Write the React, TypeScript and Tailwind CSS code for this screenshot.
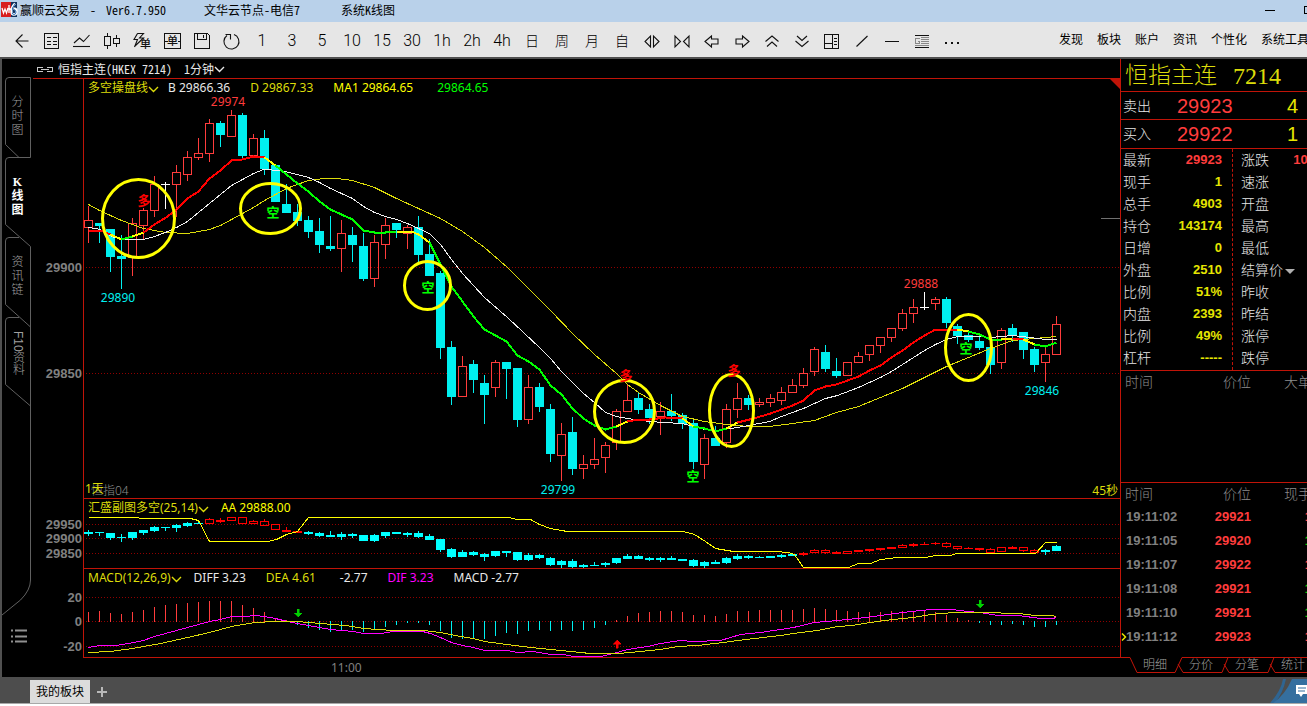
import type { ReactNode } from 'react';

type Candle = [kind: 'r' | 'c' | 'w', high: number, top: number, bottom: number, low: number];
type Point = [number, number];

const FIRST_X = 4;
const STEP = 11;

const PRICE: Candle[] = [
  ['r', 206, 220, 228, 243], ['c', 223, 223, 226, 243], ['c', 229, 229, 257, 272], ['c', 235, 256, 259, 289],
  ['r', 218, 223, 258, 276], ['r', 208, 210, 226, 239], ['r', 176, 184, 211, 217], ['w', 182, 184, 185, 209],
  ['r', 165, 172, 185, 217], ['r', 151, 157, 175, 181], ['r', 138, 153, 158, 160], ['r', 119, 123, 154, 162],
  ['c', 121, 123, 135, 147], ['r', 110, 115, 137, 137], ['c', 113, 115, 156, 158], ['r', 134, 138, 156, 156],
  ['c', 130, 138, 169, 175], ['c', 165, 165, 202, 202], ['c', 184, 204, 213, 213], ['c', 204, 212, 221, 226],
  ['c', 216, 220, 232, 238], ['c', 218, 231, 245, 253], ['c', 216, 246, 249, 251], ['r', 220, 233, 249, 272],
  ['c', 227, 235, 245, 262], ['c', 233, 246, 279, 281], ['r', 235, 242, 279, 287], ['r', 218, 225, 245, 259],
  ['c', 223, 223, 230, 238], ['r', 225, 227, 234, 249], ['c', 216, 227, 255, 262], ['c', 239, 254, 276, 276],
  ['c', 271, 273, 348, 359], ['c', 341, 347, 397, 405], ['r', 356, 366, 397, 397], ['c', 360, 364, 380, 393],
  ['c', 375, 383, 395, 424], ['r', 360, 362, 388, 397], ['c', 362, 362, 369, 399], ['c', 368, 368, 420, 427],
  ['r', 375, 387, 420, 424], ['c', 383, 387, 407, 412], ['c', 404, 409, 454, 462], ['r', 423, 434, 456, 481],
  ['c', 417, 432, 469, 475], ['r', 455, 464, 469, 479], ['r', 438, 459, 465, 469], ['r', 442, 445, 458, 473],
  ['r', 409, 411, 443, 450], ['r', 385, 400, 412, 412], ['c', 393, 398, 410, 414], ['c', 404, 409, 418, 424],
  ['r', 402, 411, 417, 435], ['c', 394, 411, 416, 421], ['c', 413, 415, 424, 429], ['c', 418, 423, 462, 469],
  ['r', 434, 438, 465, 479], ['c', 426, 438, 446, 446], ['r', 404, 409, 443, 448], ['r', 383, 398, 410, 418],
  ['c', 395, 398, 405, 410], ['r', 398, 402, 405, 407], ['r', 394, 398, 403, 407], ['r', 387, 392, 401, 405],
  ['r', 379, 385, 393, 393], ['r', 368, 373, 386, 388], ['r', 347, 349, 372, 376], ['c', 345, 352, 369, 372],
  ['c', 358, 371, 376, 378], ['r', 362, 362, 376, 376], ['r', 352, 356, 363, 363], ['r', 345, 345, 355, 361],
  ['r', 337, 337, 346, 353], ['r', 328, 328, 338, 342], ['r', 309, 313, 329, 331], ['r', 299, 307, 314, 323],
  ['w', 292, 307, 308, 310], ['r', 297, 299, 304, 310], ['c', 297, 299, 323, 328], ['c', 324, 326, 336, 344],
  ['c', 331, 335, 340, 342], ['c', 334, 341, 348, 350], ['c', 347, 347, 365, 374], ['r', 328, 330, 363, 369],
  ['c', 324, 328, 336, 342], ['c', 332, 332, 350, 359], ['c', 347, 349, 365, 372], ['r', 347, 354, 363, 382],
  ['r', 316, 324, 355, 355],
];

const SUB: Candle[] = [
  ['c', 530, 532, 534, 536], ['c', 532, 532, 533, 536], ['c', 533, 533, 538, 540], ['c', 534, 537, 538, 542],
  ['c', 532, 532, 538, 540], ['c', 530, 530, 533, 535], ['c', 526, 527, 531, 532], ['c', 527, 527, 528, 531],
  ['c', 524, 525, 528, 532], ['c', 522, 523, 526, 527], ['c', 520, 523, 524, 524], ['r', 518, 519, 524, 524],
  ['r', 518, 520, 522, 523], ['r', 517, 517, 521, 521], ['r', 517, 517, 524, 524], ['r', 520, 521, 524, 524],
  ['r', 519, 521, 526, 526], ['r', 524, 524, 530, 530], ['r', 527, 530, 532, 532], ['r', 531, 531, 533, 533],
  ['c', 531, 532, 534, 535], ['c', 532, 533, 536, 537], ['c', 531, 535, 537, 537], ['c', 532, 534, 537, 540],
  ['c', 533, 534, 536, 538], ['c', 535, 535, 541, 541], ['c', 534, 535, 541, 542], ['c', 532, 532, 536, 538],
  ['c', 532, 532, 534, 534], ['c', 532, 533, 535, 537], ['c', 531, 533, 537, 538], ['c', 534, 536, 540, 540],
  ['c', 539, 539, 550, 552], ['c', 548, 549, 557, 558], ['c', 550, 552, 557, 557], ['c', 551, 552, 555, 556],
  ['c', 553, 554, 557, 561], ['c', 551, 551, 556, 557], ['c', 551, 551, 553, 557], ['c', 552, 552, 560, 561],
  ['c', 553, 555, 560, 561], ['c', 554, 555, 558, 559], ['c', 557, 558, 565, 566], ['c', 560, 561, 565, 568],
  ['c', 559, 561, 567, 568], ['c', 564, 565, 567, 568], ['c', 562, 565, 566, 566], ['c', 562, 563, 565, 567],
  ['c', 558, 558, 563, 564], ['c', 554, 556, 559, 559], ['c', 555, 556, 559, 559], ['c', 557, 558, 560, 561],
  ['c', 557, 558, 560, 562], ['c', 556, 558, 560, 560], ['c', 559, 559, 561, 561], ['c', 559, 560, 566, 567],
  ['c', 561, 562, 566, 568], ['c', 560, 562, 564, 564], ['c', 557, 558, 563, 564], ['c', 554, 556, 559, 560],
  ['c', 555, 556, 558, 559], ['c', 556, 557, 558, 558], ['c', 556, 556, 558, 558], ['c', 554, 555, 557, 558],
  ['c', 554, 554, 556, 556], ['r', 552, 553, 555, 556], ['r', 549, 550, 553, 553], ['r', 549, 550, 553, 554],
  ['r', 551, 552, 554, 554], ['r', 551, 551, 554, 554], ['r', 550, 550, 552, 552], ['r', 549, 549, 551, 552],
  ['r', 548, 548, 550, 551], ['r', 547, 547, 549, 549], ['r', 544, 545, 548, 548], ['r', 543, 544, 546, 547],
  ['r', 542, 544, 545, 545], ['r', 542, 543, 544, 545], ['r', 542, 543, 547, 548], ['r', 546, 546, 549, 550],
  ['r', 547, 548, 549, 549], ['r', 548, 548, 550, 551], ['r', 548, 549, 553, 553], ['r', 547, 547, 552, 552],
  ['r', 546, 547, 549, 549], ['r', 547, 547, 551, 552], ['r', 549, 550, 553, 553], ['c', 549, 550, 552, 555],
  ['c', 545, 546, 551, 551],
];

const BARS = [
  612, 611, 613, 614, 612, 610, 607, 605, 604, 603, 602, 601, 601, 601, 605, 608, 612, 618, 620, 625, 628, 630, 632,
  631, 630, 632, 629, 627, 625, 623, 623, 625, 631, 638, 639, 639, 639, 636, 633, 634, 631, 630, 631, 630, 631, 630,
  628, 625, 620, 616, 613, 612, 611, 611, 612, 615, 615, 616, 614, 611, 611, 610, 610, 610, 610, 609, 608, 609, 610,
  611, 612, 612, 612, 611, 611, 612, 611, 612, 615, 618, 620, 623, 625, 625, 624, 625, 627, 627, 625,
];

const TREND: { color: string; pts: Point[] }[] = [
  { color: '#ff0000', pts: [[88, 230], [100, 230], [110, 234]] },
  { color: '#ffff00', pts: [[110, 234], [121, 239]] },
  { color: '#00ff00', pts: [[121, 239], [132, 236]] },
  { color: '#ffff00', pts: [[132, 236], [143, 232]] },
  { color: '#ff0000', pts: [[143, 232], [154, 224], [167, 216], [176, 209], [187, 198], [198, 191], [209, 178], [220, 170], [231, 160], [242, 159], [253, 156], [264, 157]] },
  { color: '#ffff00', pts: [[264, 157], [275, 165]] },
  { color: '#00ff00', pts: [[275, 165], [286, 174], [297, 183], [308, 191], [319, 201], [330, 209], [341, 214], [352, 219], [363, 230], [374, 232], [385, 232], [396, 231]] },
  { color: '#ffff00', pts: [[396, 231], [411, 231], [418, 234], [429, 242]] },
  { color: '#00ff00', pts: [[429, 242], [440, 264], [451, 286], [462, 301], [473, 316], [484, 329], [495, 335], [506, 341], [517, 355], [528, 361], [539, 369], [550, 385], [561, 394], [572, 408], [583, 418], [594, 425], [605, 429], [616, 426]] },
  { color: '#ffff00', pts: [[616, 426], [627, 421]] },
  { color: '#ff0000', pts: [[627, 421], [638, 419], [649, 419], [665, 417], [682, 418]] },
  { color: '#ffff00', pts: [[682, 418], [693, 426]] },
  { color: '#00ff00', pts: [[693, 426], [704, 428], [715, 431], [726, 428]] },
  { color: '#ffff00', pts: [[726, 428], [737, 422]] },
  { color: '#ff0000', pts: [[737, 422], [753, 418], [770, 413], [781, 409], [792, 405], [803, 400], [814, 390], [825, 386], [836, 384], [847, 380], [858, 376], [869, 370], [880, 365], [891, 357], [902, 350], [913, 342], [924, 335], [935, 329], [957, 329]] },
  { color: '#ffff00', pts: [[957, 329], [968, 331]] },
  { color: '#00ff00', pts: [[968, 331], [979, 334], [990, 339], [1001, 339]] },
  { color: '#ffff00', pts: [[1001, 339], [1012, 338]] },
  { color: '#ff0000', pts: [[1012, 338], [1023, 339]] },
  { color: '#ffff00', pts: [[1023, 339], [1034, 344]] },
  { color: '#00ff00', pts: [[1034, 344], [1045, 346], [1056, 342]] },
];

const WHITE_MA: Point[] = [
  [88, 227], [100, 229], [113, 237], [128, 239], [143, 239], [154, 236], [165, 232], [176, 227], [187, 221], [198, 212],
  [209, 203], [220, 194], [231, 185], [242, 179], [253, 173], [263, 169], [280, 170], [297, 174], [308, 177], [319, 182],
  [330, 188], [341, 193], [352, 198], [363, 206], [374, 212], [385, 216], [396, 219], [407, 223], [418, 228], [429, 233],
  [440, 244], [451, 259], [462, 273], [473, 285], [484, 297], [507, 317], [539, 347], [550, 358], [561, 371], [572, 382],
  [583, 393], [594, 402], [605, 412], [616, 416], [627, 418], [649, 421], [663, 422], [682, 423], [693, 426], [704, 429],
  [717, 430], [737, 427], [748, 425], [769, 421], [781, 416], [803, 408], [825, 398], [837, 395], [858, 387], [880, 377],
  [891, 371], [902, 364], [913, 357], [924, 350], [935, 344], [946, 339], [957, 336], [979, 336], [990, 337], [1012, 335],
  [1030, 337], [1045, 339], [1056, 339],
];

const YELLOW_MA: Point[] = [
  [88, 204], [99, 210], [121, 220], [143, 228], [165, 232], [187, 233], [209, 229], [220, 225], [231, 219], [242, 213],
  [253, 207], [264, 200], [275, 194], [286, 188], [297, 184], [308, 180], [323, 178], [337, 178], [352, 180], [374, 187],
  [396, 198], [418, 208], [440, 218], [462, 231], [484, 247], [507, 267], [539, 299], [550, 310], [572, 333], [594, 354],
  [616, 373], [627, 384], [638, 392], [660, 405], [682, 416], [704, 421], [726, 424], [748, 426], [769, 426], [792, 423],
  [814, 420], [825, 416], [836, 412], [858, 406], [880, 397], [902, 388], [924, 377], [946, 366], [968, 357], [990, 348],
  [1012, 340], [1034, 338], [1056, 336],
];

const SUB_LINE: Point[] = [
  [88, 517], [138, 517], [139, 518], [190, 518], [198, 520], [209, 541], [267, 541], [276, 539], [286, 534], [297, 531],
  [308, 517], [509, 517], [516, 519], [530, 519], [539, 524], [550, 528], [561, 530], [567, 531], [683, 531], [694, 534],
  [705, 541], [715, 548], [733, 551], [775, 551], [788, 552], [794, 554], [803, 567], [848, 567], [858, 563], [870, 563],
  [880, 559], [897, 557], [925, 557], [935, 555], [950, 555], [956, 553], [1035, 553], [1045, 542], [1056, 542],
];

const DIF_LINE: Point[] = [
  [88, 647], [99, 645], [115, 645], [128, 643], [143, 640], [154, 636], [165, 633], [176, 630], [187, 627], [198, 624],
  [209, 621], [220, 619], [231, 616], [246, 616], [254, 615], [264, 616], [275, 618], [287, 621], [297, 623], [308, 625],
  [330, 629], [353, 631], [363, 633], [380, 633], [393, 631], [422, 631], [430, 633], [440, 637], [451, 642], [462, 645],
  [473, 647], [484, 650], [507, 650], [517, 652], [533, 651], [550, 654], [563, 654], [573, 656], [600, 656], [613, 653],
  [627, 649], [647, 646], [660, 643], [680, 640], [693, 641], [720, 640], [740, 634], [760, 632], [793, 627], [814, 622],
  [837, 620], [857, 618], [880, 615], [902, 612], [930, 609], [952, 609], [967, 611], [980, 612], [997, 615], [1018, 615],
  [1040, 618], [1052, 618], [1056, 617],
];

const DEA_LINE: Point[] = [
  [88, 652], [110, 651], [132, 648], [160, 643], [187, 637], [209, 632], [231, 626], [254, 622], [275, 621], [297, 621],
  [320, 623], [345, 625], [363, 628], [393, 630], [423, 630], [440, 632], [460, 636], [473, 638], [484, 641], [506, 644],
  [530, 647], [550, 649], [570, 651], [590, 653], [618, 653], [640, 651], [660, 649], [677, 646], [697, 645], [723, 642],
  [745, 639], [780, 635], [800, 632], [817, 630], [837, 626], [852, 625], [870, 622], [892, 619], [913, 617], [930, 614],
  [953, 612], [983, 612], [1018, 613], [1035, 615], [1051, 615], [1056, 616],
];

const ELLIPSES = [
  [138, 218, 36, 39], [270, 208, 30, 25], [427, 285, 23, 24], [624, 411, 30, 31], [731, 410, 22, 36], [968, 347, 23, 33],
];

const SIGNALS: [string, number, number][] = [
  ['多', 144, 205], ['空', 273, 217], ['空', 428, 292], ['多', 626, 380], ['空', 693, 481], ['多', 734, 375], ['空', 966, 353],
];

const EXTREMES: [string, number, number, boolean][] = [
  ['29974', 228, 106, true], ['29890', 118, 302, false], ['29799', 558, 494, false], ['29888', 921, 288, true],
  ['29846', 1042, 395, false],
];

const line = (pts: Point[]) => pts.map(([x, y]) => `${x},${y}`).join(' ');

function Series({ data, up, down }: { data: Candle[]; up: string; down: string }) {
  return (
    <>
      {data.map(([kind, high, top, bottom, low], i) => {
        const x = 84 + FIRST_X + i * STEP;
        const color = kind === 'r' ? up : kind === 'c' ? down : '#ffffff';
        const hollow = kind === 'r' && bottom - top > 2;
        return (
          <g key={i} fill={color}>
            {hollow ? (
              <>
                <rect x={x} y={high} width={1} height={top - high} />
                <rect x={x} y={bottom} width={1} height={low - bottom} />
                <path d={`M${x - 4} ${top}h9v${bottom - top}h-9z M${x - 3} ${top + 1}v${bottom - top - 2}h7v${top + 2 - bottom}z`} fillRule="evenodd" />
              </>
            ) : (
              <>
                <rect x={x} y={high} width={1} height={low - high} />
                <rect x={x - 4} y={top} width={9} height={bottom - top} />
              </>
            )}
          </g>
        );
      })}
    </>
  );
}

function Pane({ top, grid, className, children, legend }: {
  top: number; grid: [number, string][]; className: string; children: ReactNode; legend: ReactNode;
}) {
  return (
    <section className={`relative ml-[50px] border-b border-l border-[#c01408] ${className}`}>
      <svg className="absolute inset-0 h-full w-full overflow-visible" shapeRendering="crispEdges" aria-hidden="true">
        {grid.map(([y, label]) => (
          <g key={label}>
            <line x1="2" x2="100%" y1={y - top + 0.5} y2={y - top + 0.5} stroke="#900000" strokeDasharray="1 2" />
            <text x="-2" y={y - top + 5} textAnchor="end" fill="#808080" className="text-[13px] font-bold">{label}</text>
          </g>
        ))}
        <g transform={`translate(-84 ${-top})`}>{children}</g>
      </svg>
      <div className="relative flex h-[18px] items-center whitespace-nowrap pl-1 font-['Noto_Sans','Noto_Sans_CJK_SC',sans-serif] text-xs text-[#e8e8e8]">{legend}</div>
    </section>
  );
}

function Chevron() {
  return (
    <svg width="11" height="7" viewBox="0 0 11 7" fill="none" stroke="currentColor" strokeWidth="1.4" className="mt-0.5" aria-hidden="true">
      <path d="M1 1l4.5 4.5L10 1" />
    </svg>
  );
}

function Arrow({ x, y, up }: { x: number; y: number; up?: boolean }) {
  return up ? (
    <path d={`M${x} ${y}l-4 4h3v4h2v-4h3z`} fill="#ff0000" stroke="#ff0000" strokeWidth="0.5" />
  ) : (
    <path d={`M${x} ${y + 8}l-4 -4h3v-4h2v4h3z`} fill="#00d000" stroke="#00d000" strokeWidth="0.5" />
  );
}

const ic = (children: ReactNode) => (
  <svg width="20" height="20" viewBox="0 0 20 20" fill="none" stroke="#111" strokeWidth="1" shapeRendering="crispEdges" aria-hidden="true">{children}</svg>
);
const ics = (children: ReactNode) => (
  <svg width="20" height="20" viewBox="0 0 20 20" fill="none" stroke="#111" strokeWidth="1.1" aria-hidden="true">{children}</svg>
);

const TOOLS: { name: string; body: ReactNode }[] = [
  { name: '返回', body: ics(<path d="M16.500 10H4.500M10.500 3.500L4 10l6.500 6.500" />) },
  { name: '报价', body: ic(<><rect x="2.500" y="2.500" width="14" height="15" /><path d="M5 6.500h4M5 10.500h4M5 13.500h4M11 6.500h4M11 10.500h4M11 13.500h4" /></>) },
  { name: '分时', body: ics(<><path d="M2 12l5.500-5 4 3.500L17.500 4" /><path d="M1 15.500h17" /></>) },
  { name: 'K线', body: ic(<path d="M2.500 5.500h6v9h-6zM5.500 2v3.500M5.500 14.500V18M11.500 7.500h6v5h-6zM14.500 4v3.500M14.500 12.500V16" />) },
  { name: '闪电下单', body: ics(<><path d="M5.500 2.500L2 8.500h3.500L2.500 16M5.500 2.500h6L7.500 7h4L3 15" /><text x="8" y="17" className="text-[11px] font-medium" fill="#111" stroke="none">单</text></>) },
  { name: '下单', body: ic(<><path d="M2.500 2.500h16v15h-16zM2.500 10.500h3M15.500 10.500h3" /><text x="5" y="14" className="text-[11px] font-medium" fill="#111" stroke="none">单</text></>) },
  { name: '保存', body: ic(<path d="M2.500 2.500h13l2 2v13h-15zM5.500 2.500v6h9v-6M11.500 4v3" />) },
  { name: '刷新', body: ics(<path d="M12 3.500A7.500 7.500 0 1 1 5 4.500M3.500 3.500h5v5" />) },
  { name: '1', body: '1' }, { name: '3', body: '3' }, { name: '5', body: '5' }, { name: '10', body: '10' },
  { name: '15', body: '15' }, { name: '30', body: '30' }, { name: '1h', body: '1h' }, { name: '2h', body: '2h' },
  { name: '4h', body: '4h' }, { name: '日', body: '日' }, { name: '周', body: '周' }, { name: '月', body: '月' },
  { name: '自', body: '自' },
  { name: '放宽', body: ics(<path d="M8.500 5v11L3 10.500zM11.500 5v11l5.500-5.500z" />) },
  { name: '压缩', body: ics(<path d="M3 5v11l5.500-5.500zM17 5v11l-5.500-5.500z" />) },
  { name: '左移', body: ics(<path d="M3 10.500L9.500 5v3H16v5H9.500v3z" />) },
  { name: '右移', body: ics(<path d="M17 10.500L10.500 5v3H4v5h6.500v3z" />) },
  { name: '上翻', body: ics(<path d="M3.500 10.500l6.500-5.500 6.500 5.500M5 15.500l5-4.500 5 4.500" />) },
  { name: '下翻', body: ics(<path d="M5 5l5 4.500L15 5M3.500 10l6.500 5.500 6.500-5.500" />) },
  { name: '布局', body: ic(<path d="M2.500 3.500h14v14h-14zM10.500 3.500v14M2.500 12.500h8M12 7.500h3M12 10.500h3M12 13.500h3" />) },
  { name: '斜线', body: ics(<path d="M4.500 15.500l11-10.500" />) },
  { name: '横线', body: ic(<path d="M3 10.500h14" />) },
  { name: '公告', body: ic(<><path d="M3 4.500h14M3 16.500h14" /><path d="M9 6.500h8M9 8.500h8M9 10.500h8M9 12.500h8M3 14.500h14M7.500 7.500h-4v5h4v-2.500h-2" stroke="#888" /></>) },
  { name: '更多', body: ic(<path d="M3 11h2v2h-2zM9 11h2v2h-2zM15 11h2v2h-2z" fill="#111" stroke="none" />) },
];

const QUOTES: [string, string, string][] = [
  ['最新', '29923', '涨跌'], ['现手', '1', '速涨'], ['总手', '4903', '开盘'], ['持仓', '143174', '最高'], ['日增', '0', '最低'],
  ['外盘', '2510', '结算价'], ['比例', '51%', '昨收'], ['内盘', '2393', '昨结'], ['比例', '49%', '涨停'], ['杠杆', '-----', '跌停'],
];

const TICKS: [string, string, boolean][] = [
  ['19:11:02', '29921', true], ['19:11:05', '29920', false], ['19:11:07', '29922', true], ['19:11:08', '29921', false],
  ['19:11:10', '29921', false], ['19:11:12', '29923', true],
];

function TickTable({ last, rows }: { last: string; rows: [string, string, boolean][] }) {
  return (
    <table className="w-[191px] table-fixed border-collapse text-[13px] font-bold leading-6">
      <thead>
        <tr className="text-sm font-light leading-[22px] text-[#8c8c8c]">
          <th className="w-[90px] pl-1 text-left font-light">时间</th>
          <th className="w-10 text-right font-light">价位</th>
          <th className="text-right font-light">{last}</th>
        </tr>
      </thead>
      <tbody>
        {rows.map(([time, price, up], i) => (
          <tr key={time}>
            <td className="relative h-6 p-0 pl-[5px] text-[#808080]">
              {i === rows.length - 1 && (
                <svg width="6" height="8" className="absolute left-0 top-2" fill="none" stroke="#e6e600" strokeWidth="1.500" aria-hidden="true"><path d="M1 0.500L4.500 4L1 7.500" /></svg>
              )}
              {time}
            </td>
            <td className="p-0 text-right text-[#ff3c3c]">{price}</td>
            <td className={up ? 'p-0 text-right text-[#ff3c3c]' : 'p-0 text-right text-[#00d000]'}>1</td>
          </tr>
        ))}
      </tbody>
    </table>
  );
}

export default function App() {
  return (
    <div className="flex min-h-screen w-full flex-col overflow-hidden bg-[#4d4d4d] font-['Liberation_Sans','Noto_Sans_CJK_SC',sans-serif] text-xs text-[#e8e8e8]">
      <header className="flex h-[22px] items-center overflow-hidden whitespace-nowrap bg-[#b9d1ea] pb-0.5 font-['Noto_Sans_Mono_CJK_SC','Noto_Sans_CJK_SC',monospace] text-black">
        <svg width="18" height="18" viewBox="0 0 18 18" className="mr-0.5 shrink-0" aria-hidden="true">
          <rect x="1" y="1" width="11" height="15" fill="#d81e1e" />
          <path d="M11 1h6v15h-6z" fill="#12325c" />
          <path d="M15 2.500q-4 4-3.500 8a2.500 3 0 0 0 5 0q0-3-3-3" fill="none" stroke="#fff" strokeWidth="2.400" />
          <path d="M15 3q-3.500 4-3 8a2 2.500 0 0 0 4 0q0-2-2-2.500" fill="none" stroke="#2468b8" strokeWidth="1" />
          <path d="M2 7l1.500 5L5 8l1.500 4L8 7M9 4v8M9 9q2-2 2.500 0v3" fill="none" stroke="#fff" strokeWidth="1.300" />
        </svg>
        <span>赢顺云交易</span>
        <span className="ml-2.5">-</span>
        <span className="ml-2.5">Ver6.7.950</span>
        <span className="ml-[38px]">文华云节点-电信7</span>
        <span className="ml-[41px]">系统K线图</span>
        <button aria-label="最小化" className="ml-auto flex h-full w-[39px] items-center">
          <span className="h-px w-[10px] bg-black" />
        </button>
        <button aria-label="还原" className="h-[8px] w-[3px] border-y border-l border-black" />
      </header>

      <div className="flex h-[35px] shrink-0 items-center overflow-hidden bg-[#e6e6e6] pl-[7px] text-black">
        <div className="flex shrink-0">
          {TOOLS.map((t) => (
            <button key={t.name} aria-label={t.name} className="flex h-[35px] w-[30px] items-center justify-center pt-0.5 font-['Roboto','Noto_Sans_CJK_SC',sans-serif] text-base font-light leading-none">
              {/^[日周月自]$/.test(t.name) ? <span className="text-sm">{t.body}</span> : t.body}
            </button>
          ))}
        </div>
        <nav className="ml-auto flex w-[248px] shrink-0 gap-[14px] whitespace-nowrap">
          {['发现', '板块', '账户', '资讯', '个性化', '系统工具'].map((m) => (
            <a key={m} href="#" className="shrink-0">{m}</a>
          ))}
        </nav>
      </div>

      <main className="flex h-[620px] shrink-0 border-l-2 border-t-2 border-[#505050] bg-black">
        <aside className="relative flex w-[31px] shrink-0 flex-col items-center pt-[17px] font-['Liberation_Serif','Noto_Sans_CJK_SC',serif]">
          <svg className="absolute inset-0 h-full w-full" fill="none" stroke="#606060" aria-hidden="true">
            <path d="M28.500 98.500V18.500H7q-3.500 0-3.500 3.500V85.500L17 98.500" />
            <path d="M28.500 98.500H7q-3.500 0-3.500 3.500V165.500L28.500 187.500V521q0 10-10 20L0 556" />
            <path d="M17 178.500H7q-3.500 0-3.500 3.500V245.500L28.500 268" />
            <path d="M17 258.500H7q-3.500 0-3.500 3.500V325.500L28.500 347" />
            <path d="M9 571.500h2M9 577.500h2M9 582.500h2M13 571.500h12M13 577.500h12M13 582.500h12" stroke="#909090" strokeWidth="2" />
          </svg>
          {['分时图', 'K线图', '资讯链'].map((t) => (
            <button key={t} className={t === 'K线图'
              ? 'relative flex h-20 w-4 flex-col items-center justify-center text-xs font-bold leading-[14px] text-white'
              : 'relative flex h-20 w-4 flex-col items-center justify-center text-xs font-light leading-[14px] text-[#a0a0a0]'}>
              {[...t].map((c) => <span key={c}>{c}</span>)}
            </button>
          ))}
          <button className="relative flex h-20 w-4 items-center justify-center whitespace-nowrap pb-1.5 font-['Liberation_Sans','Noto_Sans_CJK_SC',sans-serif] text-xs font-light text-[#a0a0a0] [writing-mode:vertical-rl]">F10资料</button>
        </aside>

        <div className="flex min-w-0 flex-1 flex-col">
          <div className="flex h-5 items-center border-b border-[#c01408] pl-1 font-['Noto_Sans_Mono_CJK_SC','Noto_Sans_CJK_SC',monospace]">
            <svg width="17" height="8" viewBox="0 0 17 8" fill="none" stroke="#c8c8c8" shapeRendering="crispEdges" className="mr-1" aria-hidden="true">
              <path d="M6 2.500H.5v4H6M10 2.500h5.500v4H10M4 4.500h8" />
            </svg>
            <span>恒指主连(HKEX 7214)</span>
            <button className="ml-3 flex items-center">1分钟<Chevron /></button>
          </div>

          <div className="relative">
            <Pane
              top={79}
              grid={[[267, '29900'], [373, '29850']]}
              className="h-[420px]"
              legend={
                <>
                  <button className="mr-[9px] flex items-center text-[#dcdc0a]">多空操盘线<Chevron /></button>
                  <span className="mr-5">B 29866.36</span>
                  <span className="mr-5 text-[#dcdc0a]">D 29867.33</span>
                  <span className="mr-6 text-[#ffff00]">MA1 29864.65</span>
                  <span className="text-[#00ff00]">29864.65</span>
                </>
              }
            >
              <Series data={PRICE} up="#ff3c3c" down="#00f0f0" />
              <g transform="translate(0.500 0.500)" fill="none">
                <polyline points={line(YELLOW_MA)} stroke="#dcdc0a" />
                <polyline points={line(WHITE_MA)} stroke="#f0f0f0" />
                {TREND.map((s, i) => <polyline key={i} points={line(s.pts)} stroke={s.color} strokeWidth="2" />)}
                {ELLIPSES.map(([x, y, rx, ry]) => (
                  <ellipse key={x} cx={x} cy={y} rx={rx} ry={ry} stroke="#ffff00" strokeWidth="3" shapeRendering="auto" />
                ))}
              </g>
              {SIGNALS.map(([s, x, y]) => (
                <text key={x} x={x} y={y} textAnchor="middle" fill={s === '多' ? '#ff0000' : '#00ff00'} className="text-[13px] font-bold">{s}</text>
              ))}
              {EXTREMES.map(([s, x, y, high]) => (
                <text key={x} x={x} y={y} textAnchor="middle" fill={high ? '#ff3c3c' : '#00f0f0'} className="font-['Noto_Sans',sans-serif] text-xs">{s}</text>
              ))}
            </Pane>
            <span className="absolute bottom-0 left-[58px] font-['Noto_Sans','Noto_Sans_CJK_SC',sans-serif] font-light text-[#8c8c8c]">恒指04</span>
            <span className="absolute bottom-0.5 left-[52px] font-['Noto_Sans','Noto_Sans_CJK_SC',sans-serif] text-[#dcdc0a]">1天</span>
            <span className="absolute bottom-0 right-0.5 font-['Noto_Sans','Noto_Sans_CJK_SC',sans-serif] text-[#dcdc0a]">45秒</span>
            <svg width="10" height="10" className="absolute right-0 top-0" aria-hidden="true"><path d="M0 0h10v10z" fill="#c01408" /></svg>
            <span className="absolute right-0 top-[139px] h-px w-[19px] bg-[#707070]" />
          </div>

          <Pane
            top={499}
            grid={[[524, '29950'], [538, '29900'], [553, '29850']]}
            className="h-[70px]"
            legend={
              <>
                <button className="mr-3 flex items-center text-[#dcdc0a]">汇盛副图多空(25,14)<Chevron /></button>
                <span className="text-[#ffff00]">AA 29888.00</span>
              </>
            }
          >
            <Series data={SUB} up="#ff0000" down="#00ffff" />
            <polyline points={line(SUB_LINE)} transform="translate(0.500 0.500)" fill="none" stroke="#ffff00" />
          </Pane>

          <Pane
            top={569}
            grid={[[597, '20'], [621, '0'], [646, '-20']]}
            className="h-[89px]"
            legend={
              <>
                <button className="mr-3 flex items-center text-[#dcdc0a]">MACD(12,26,9)<Chevron /></button>
                <span className="mr-5">DIFF 3.23</span>
                <span className="mr-6 text-[#dcdc0a]">DEA 4.61</span>
                <span className="mr-5">-2.77</span>
                <span className="mr-5 text-[#ff00ff]">DIF 3.23</span>
                <span>MACD -2.77</span>
              </>
            }
          >
            {BARS.map((y, i) => (
              <rect key={i} x={84 + FIRST_X + i * STEP} y={Math.min(y, 621)} width={1} height={Math.abs(y - 621) + (y < 621 ? 1 : 0)} fill={y < 621 ? '#ff3c3c' : '#00f0f0'} />
            ))}
            <g transform="translate(0.500 0.500)" fill="none">
              <polyline points={line(DIF_LINE)} stroke="#ff00ff" />
              <polyline points={line(DEA_LINE)} stroke="#dcdc0a" />
            </g>
            <Arrow x={298} y={609} />
            <Arrow x={617} y={640} up />
            <Arrow x={980} y={600} />
          </Pane>
          <div className="h-[19px] pl-[298px] font-['Noto_Sans',sans-serif] leading-[19px] text-[#808080]">11:00</div>
        </div>

        <aside className="flex w-[187px] shrink-0 flex-col overflow-hidden">
          <div className="flex h-[599px] flex-col border-l border-[#c01408]">
            <h1 className="flex h-[33px] shrink-0 items-center gap-4 whitespace-nowrap border-b border-[#c01408] pl-1 pt-0.5 font-['Liberation_Serif','Noto_Sans_CJK_SC',serif] text-2xl font-light text-[#dcdc0a]">
              <span className="text-[23px]">恒指主连</span><span>7214</span>
            </h1>
            {[['卖出', '29923', '4'], ['买入', '29922', '1']].map(([label, price, qty], i) => (
              <div key={label} className={i === 0
                ? 'flex h-7 shrink-0 items-center border-b border-[#c01408] pl-0.5 text-xl'
                : 'flex h-[29px] shrink-0 items-center border-b border-[#c01408] pl-0.5 text-xl'}>
                <span className="w-[54px] text-sm font-light">{label}</span>
                <span className="text-[#ff3c3c]">{price}</span>
                <span className="ml-auto pr-[9px] text-[#e6e600]">{qty}</span>
              </div>
            ))}
            <div className="flex h-[222px] shrink-0 border-b border-[#c01408] text-sm leading-[22px]">
              <dl className="w-[112px] shrink-0 border-r border-dashed border-[#c01408] pl-0.5 pr-[10px]">
                {QUOTES.map(([label, value], i) => (
                  <div key={i} className="flex h-[22px] justify-between">
                    <dt className="font-light">{label}</dt>
                    <dd className={i === 0 ? 'text-[13px] font-bold text-[#ff3c3c]' : 'text-[13px] font-bold text-[#e6e600]'}>{value}</dd>
                  </div>
                ))}
              </dl>
              <dl className="w-[82px] shrink-0 pl-2">
                {QUOTES.map(([, , label], i) => (
                  <div key={label} className="flex h-[22px] items-center justify-between whitespace-nowrap">
                    <dt className="flex items-center gap-0.5 font-light">
                      {label}
                      {label === '结算价' && <svg width="10" height="6" className="mt-1" aria-hidden="true"><path d="M0 0h10L5 5z" fill="#b0b0b0" /></svg>}
                    </dt>
                    {i === 0 && <dd className="text-[13px] font-bold text-[#ff3c3c]">102</dd>}
                  </div>
                ))}
              </dl>
            </div>
            <div className="h-[112px] shrink-0 border-b border-[#c01408]"><TickTable last="大单" rows={[]} /></div>
            <TickTable last="现手" rows={TICKS} />
          </div>
          <nav className="relative -mt-px flex h-5 shrink-0 gap-[22px] whitespace-nowrap pl-[23px] font-light leading-4 text-[#a0a0a0]">
            <svg className="absolute inset-0 h-full w-full" fill="none" stroke="#c01408" aria-hidden="true">
              <path d="M0 .5H10L17 15.500H55L62 .5H187M58 7l5 8.500H102L108 .5M104 7l5 8.500H148L154 .5M150 7l5 8.500H187" />
            </svg>
            {['明细', '分价', '分笔', '统计'].map((t) => <button key={t} className="relative h-4 shrink-0">{t}</button>)}
          </nav>
        </aside>
      </main>

      <footer className="flex h-[26px] shrink-0 items-stretch bg-[#4d4d4d] pl-[30px]">
        <button className="mt-[3px] w-[60px] bg-[#dcdcdc] text-xs leading-[22px] text-black">我的板块</button>
        <button aria-label="添加板块" className="ml-1.5 mt-1 flex items-center">
          <svg width="12" height="12" stroke="#b8b8b8" strokeWidth="2" aria-hidden="true"><path d="M6 1v10M1 6h10" /></svg>
        </button>
        <button aria-label="消息" className="ml-auto">
          <svg width="38" height="26" viewBox="0 0 38 26" aria-hidden="true">
            <path d="M14 2h3q-3 14-11 24H1Q12 14 14 2z" fill="#2f6592" />
            <path d="M23 2h15v24H4Q16 18 23 2z" fill="#356f9f" />
            <path d="M27 8h11v9h-4l-2 3-2-3h-3z" fill="#fff" />
            <path d="M29 11h8M29 14h7" stroke="#356f9f" strokeWidth="1.200" />
          </svg>
        </button>
      </footer>
      <div className="min-h-[3px] flex-1 border-t border-[#a8a8a8] bg-white" />
    </div>
  );
}
